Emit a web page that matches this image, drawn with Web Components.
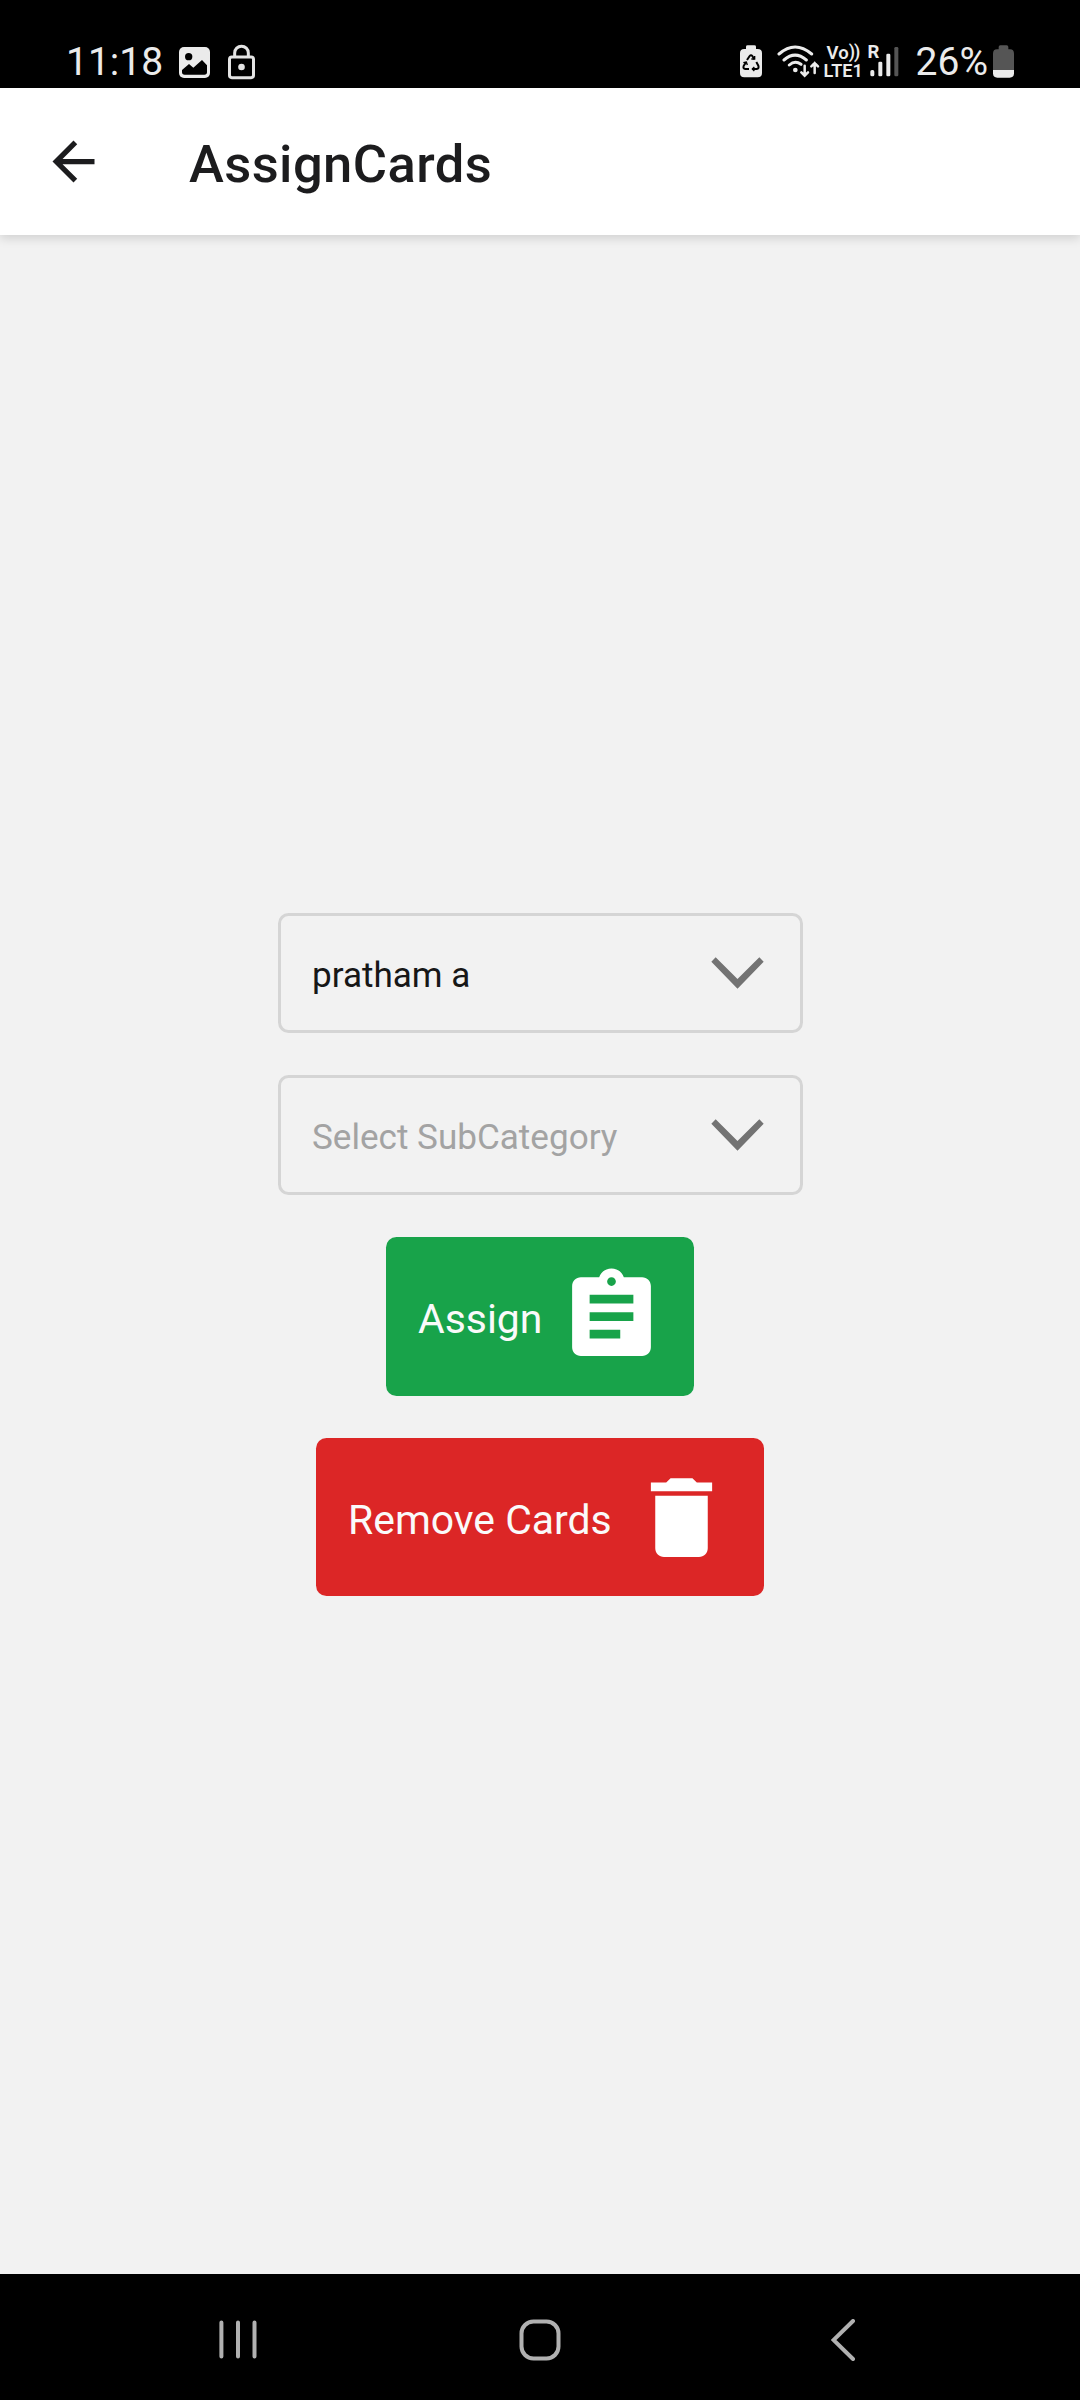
<!DOCTYPE html>
<html lang="en">
<head>
<meta charset="utf-8">
<title>AssignCards</title>
<style>
html,body{margin:0;padding:0;background:#f2f2f2}
body{font-family:Roboto,sans-serif}
</style>
</head>
<body>
<assign-screen></assign-screen>
<script>
const define = (name, html) => {
  const t = document.createElement('template');
  t.innerHTML = html;
  customElements.define(name, class extends HTMLElement {
    constructor() {
      super();
      this.attachShadow({ mode: 'open' }).appendChild(t.content.cloneNode(true));
    }
  });
};

define('signal-bars', `
<style>
:host{display:block;position:relative;width:32px;height:34px}
span{position:absolute;left:0;top:-2px;font:700 18.500px/18px Roboto,sans-serif;color:#ebebeb}
svg{display:block}
</style>
<svg width="32" height="34" viewBox="0 0 96 102" fill="#ebebeb">
<rect x="7" y="75" width="12" height="19" rx="5"/><rect x="31" y="50" width="12" height="44" rx="4"/>
<rect x="55" y="26" width="12" height="68" rx="4"/><rect x="79" y="6" width="12" height="88" rx="4" fill="#555"/>
</svg><span>R</span>`);

define('lte-label', `
<style>
:host{display:flex;flex-direction:column;color:#ebebeb;width:42px;white-space:nowrap;font:600 18px/18px Roboto,sans-serif}
.a{padding-left:3px;display:flex;font-size:18.500px;margin-top:-1px}
.a i{font-style:normal;font-size:18px;letter-spacing:-1px;margin-top:-1px}
</style>
<div class="a"><span>Vo</span><i>))</i></div><div class="b">LTE1</div>`);

define('status-bar', `
<style>
:host{display:flex;justify-content:space-between;box-sizing:border-box;height:88px;background:#000;color:#ebebeb;padding:44px 66px 0 66px}
div{display:flex;align-items:flex-start}
svg{display:block;flex:none}
.t{font-size:39px;line-height:46px;margin-top:-5px;white-space:nowrap}
</style>
<div>
<span class="t">11:18</span>
<svg style="margin:3px 0 0 16px" width="31" height="31" viewBox="0 0 93 93"><rect width="93" height="93" rx="15" fill="#ebebeb"/><circle cx="29" cy="29" r="11"/><path d="M9 69 30 51 43 62 69 39 84 55V76Q84 83 76 83H17Q9 83 9 76Z"/></svg>
<svg style="margin:0 0 0 18px" width="27" height="36" viewBox="0 0 81 108" fill="none" stroke="#e4e4e4" stroke-width="9"><path d="M20 38V27a20 20 0 0 1 41 0V38"/><rect x="4.500" y="39" width="72" height="62" rx="7"/><circle cx="40.500" cy="69" r="10" fill="#e4e4e4" stroke="none"/></svg>
</div>
<div>
<svg style="margin-top:1px" width="22" height="33" viewBox="0 0 66 99"><path fill="#ebebeb" d="M18 12V5Q18 1 23 1H43Q48 1 48 5V12H53Q66 12 66 24V84Q66 97 53 97H13Q0 97 0 84V24Q0 12 13 12Z"/><g fill="none" stroke="#000" stroke-width="6"><path d="M21 45 29 33Q33 28 37 33L43 43M49 51 55 62Q58 71 50 72H37M27 72H16Q8 71 11 63L18 52"/><path d="M34 42H44V33M43 66 37 72 43 78M10 53 19 51 22 60" stroke-width="4"/></g></svg>
<svg style="margin:1px 0 0 15px" width="43" height="33" viewBox="0 0 129 99" fill="none" stroke="#ebebeb" stroke-width="9" stroke-linecap="round"><path d="M6 27Q54-15 104 27M21 45Q54 16 88 45M37 60Q54 45 72 58"/><circle cx="55" cy="75" r="7" fill="#ebebeb" stroke="none"/><path d="M83 62V91M73 82 83 92 93 82M113 84V54M103 64 113 54 123 64" stroke-width="7.500"/></svg>
<lte-label style="margin:1px 0 0 4px"></lte-label>
<signal-bars style="margin:1px 0 0 2px"></signal-bars>
<span class="t" style="margin-left:16px">26%</span>
<svg style="margin:1px 0 0 5px" width="21" height="33" viewBox="0 0 63 99"><path fill="#555" d="M17 13V6Q17 1 22 1H41Q46 1 46 6V13H51Q63 13 63 26V75H0V26Q0 13 12 13Z"/><path fill="#ebebeb" d="M0 75H63V85Q63 98 50 98H13Q0 98 0 85Z"/></svg>
</div>`);

define('app-header', `
<style>
:host{display:flex;align-items:center;position:relative;height:147px;background:#fff;padding-left:42px;box-shadow:0 3px 10px rgba(0,0,0,.15)}
svg{display:block}
h1{margin:0 0 0 84px;font:500 52.500px/62px Roboto,sans-serif;letter-spacing:.42px;color:#1c1c1e;padding-top:4px}
</style>
<svg width="63" height="63" viewBox="0 0 24 24" fill="#1c1c1e"><path d="M20 11H7.830l5.590-5.590L12 4l-8 8 8 8 1.410-1.410L7.830 13H20z"/></svg>
<h1><slot></slot></h1>`);

define('select-field', `
<style>
:host{display:flex;align-items:center;justify-content:space-between;box-sizing:border-box;width:525px;height:120px;border:3px solid #d5d5d5;border-radius:10.500px;padding:0 36px 0 31.500px;font-size:35.100px;line-height:44px;color:#171717}
:host([placeholder]){color:#a3a3a3}
span{padding-top:4px;white-space:nowrap}
svg{display:block}
</style>
<span><slot></slot></span>
<svg width="53" height="32" viewBox="0 0 159 96"><path fill="#737373" d="M1 14 14 1 79.500 66 145 1 158 14 79.500 95Z"/></svg>`);

define('action-button', `
<style>
:host{display:flex;align-items:center;box-sizing:border-box;height:158px;border-radius:10.500px;padding:0 30px 0 32px;color:#fafafa;background:var(--fill)}
span{font-size:40.900px;line-height:50px;padding-top:var(--drop,6px);white-space:nowrap;flex:1}
::slotted(svg){display:block;flex:none}
</style>
<span><slot></slot></span><slot name="icon"></slot>`);

define('nav-bar', `
<style>
:host{display:flex;box-sizing:border-box;height:126px;background:#000;padding:45px 0 0 218px}
svg{display:block;flex:none}
.home{margin:0 270px 0 261px}
</style>
<svg width="40" height="42" viewBox="0 0 40 42" stroke="#b1b1b1" stroke-width="4" stroke-linecap="round"><path d="M3.400 3.500V37.500M20 3.500V37.500M36.500 3.500V37.500"/></svg>
<svg class="home" width="42" height="42" viewBox="0 0 42 42" fill="none" stroke="#b1b1b1" stroke-width="4"><rect x="2.500" y="2.500" width="37" height="37" rx="12"/></svg>
<svg width="26" height="42" viewBox="0 0 26 42" fill="none" stroke="#b1b1b1" stroke-width="4" stroke-linecap="round"><path d="M22 2 2.500 21 22 40"/></svg>`);

define('assign-screen', `
<style>
:host{display:flex;flex-direction:column;width:1080px;height:2400px;background:#f2f2f2;font-family:Roboto,sans-serif}
main{flex:1;display:flex;flex-direction:column;align-items:center;justify-content:center;gap:42px}
</style>
<status-bar></status-bar>
<app-header>AssignCards</app-header>
<main>
<select-field>pratham a</select-field>
<select-field placeholder>Select SubCategory</select-field>
<action-button style="--fill:#18a34a;--drop:4px;width:308px;height:159px">Assign<svg slot="icon" width="105" height="105" viewBox="0 0 24 24" fill="#fff"><path d="M19 3h-4.180C14.400 1.840 13.300 1 12 1s-2.400.840-2.820 2H5c-1.100 0-2 .900-2 2v14c0 1.100.900 2 2 2h14c1.100 0 2-.900 2-2V5c0-1.100-.900-2-2-2zm-7 0c.550 0 1 .450 1 1s-.450 1-1 1-1-.450-1-1 .450-1 1-1zm2 14H7v-2h7v2zm3-4H7v-2h10v2zm0-4H7V7h10v2z"/></svg></action-button>
<action-button style="--fill:#dc2626;width:448px">Remove Cards<svg slot="icon" width="105" height="105" viewBox="0 0 24 24" fill="#fff"><path d="M6 19c0 1.100.900 2 2 2h8c1.100 0 2-.900 2-2V7H6v12zM19 4h-3.500l-1-1h-5l-1 1H5v2h14V4z"/></svg></action-button>
</main>
<nav-bar></nav-bar>`);
</script>
</body>
</html>
